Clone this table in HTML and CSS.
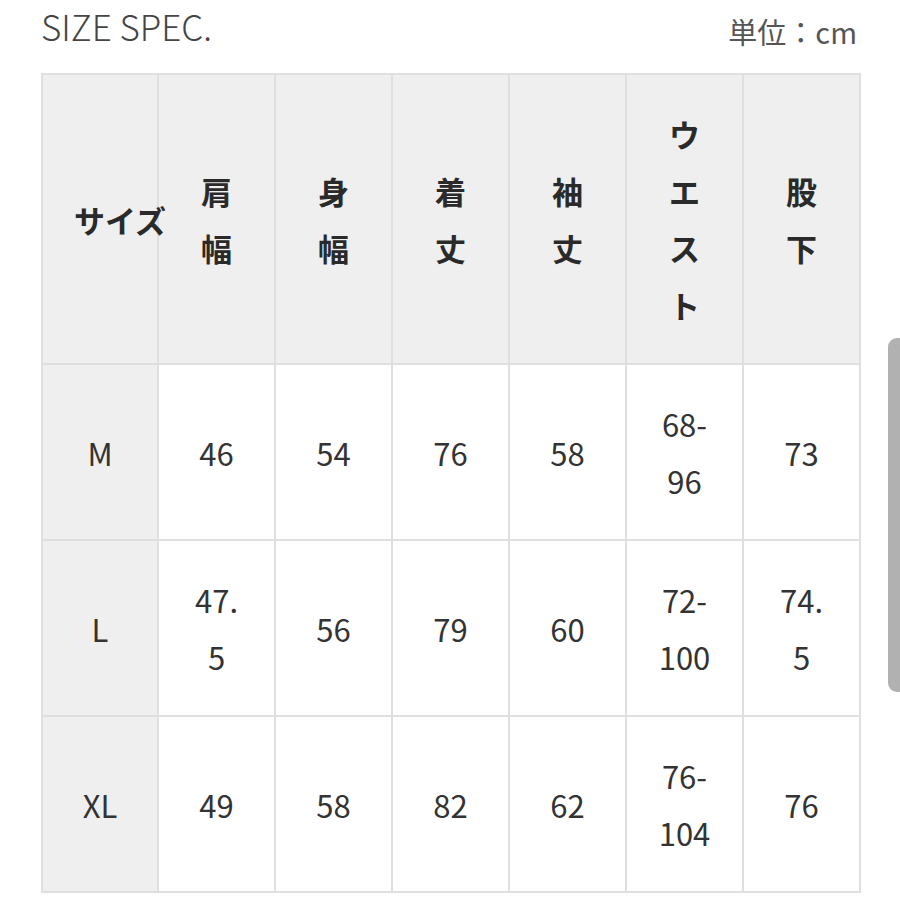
FILE: index.html
```html
<!DOCTYPE html>
<html lang="ja">
<head>
<meta charset="utf-8">
<title>SIZE SPEC.</title>
<link rel="stylesheet" href="styles.css">
</head>
<body>
<div class="page">
  <div class="head">
    <h1 class="title">SIZE SPEC.</h1>
    <div class="unit">単位：cm</div>
  </div>
  <table class="spec">
    <colgroup>
      <col class="c0"><col class="c"><col class="c"><col class="c"><col class="c"><col class="c"><col class="c">
    </colgroup>
    <thead>
      <tr>
        <th class="first">サイズ</th>
        <th>肩<br>幅</th>
        <th>身<br>幅</th>
        <th>着<br>丈</th>
        <th>袖<br>丈</th>
        <th>ウ<br>エ<br>ス<br>ト</th>
        <th>股<br>下</th>
      </tr>
    </thead>
    <tbody>
      <tr>
        <td class="first">M</td>
        <td>46</td><td>54</td><td>76</td><td>58</td><td>68-<br>96</td><td>73</td>
      </tr>
      <tr>
        <td class="first">L</td>
        <td>47.<br>5</td><td>56</td><td>79</td><td>60</td><td>72-<br>100</td><td>74.<br>5</td>
      </tr>
      <tr>
        <td class="first">XL</td>
        <td>49</td><td>58</td><td>82</td><td>62</td><td>76-<br>104</td><td>76</td>
      </tr>
    </tbody>
  </table>
</div>
<div class="scrollbar"></div>
</body>
</html>
```

FILE: styles.css
```css
html, body {
  margin: 0;
  padding: 0;
  background: #ffffff;
}
body {
  font-family: "Noto Sans CJK JP", "Noto Sans", sans-serif;
  color: #333333;
  width: 900px;
  height: 900px;
  overflow: hidden;
}
.page {
  padding: 0 41px 0 41px;
}
.head {
  display: flex;
  justify-content: space-between;
  align-items: flex-start;
  height: 73px;
}
.title {
  margin: 0;
  font-size: 35px;
  font-weight: 300;
  line-height: 51px;
  color: #444444;
  letter-spacing: 0;
}
.unit {
  font-size: 29px;
  line-height: 62px;
  color: #555555;
  padding-right: 2px;
}
.spec {
  border-collapse: collapse;
  table-layout: fixed;
  width: 818px;
  border: 2px solid #dfdfdf;
}
.spec col.c0 {
  width: 116px;
}
.spec col.c {
  width: 117px;
}
.spec th,
.spec td {
  border: 2px solid #dfdfdf;
  padding: 30px 0;
  text-align: center;
  vertical-align: middle;
  font-size: 31px;
  line-height: 57px;
}
.spec th {
  background: #efefef;
  font-weight: 700;
  color: #2a2a2a;
}
.spec td {
  background: #ffffff;
  font-weight: 400;
  color: #333333;
}
.spec .first {
  background: #efefef;
  white-space: nowrap;
}
.spec th.first {
  text-align: left;
  padding-left: 31px;
  overflow: visible;
}
.scrollbar {
  position: absolute;
  left: 888px;
  top: 338px;
  width: 14px;
  height: 354px;
  background: #b1b1b1;
  border-radius: 9px 0 0 9px;
}
```
